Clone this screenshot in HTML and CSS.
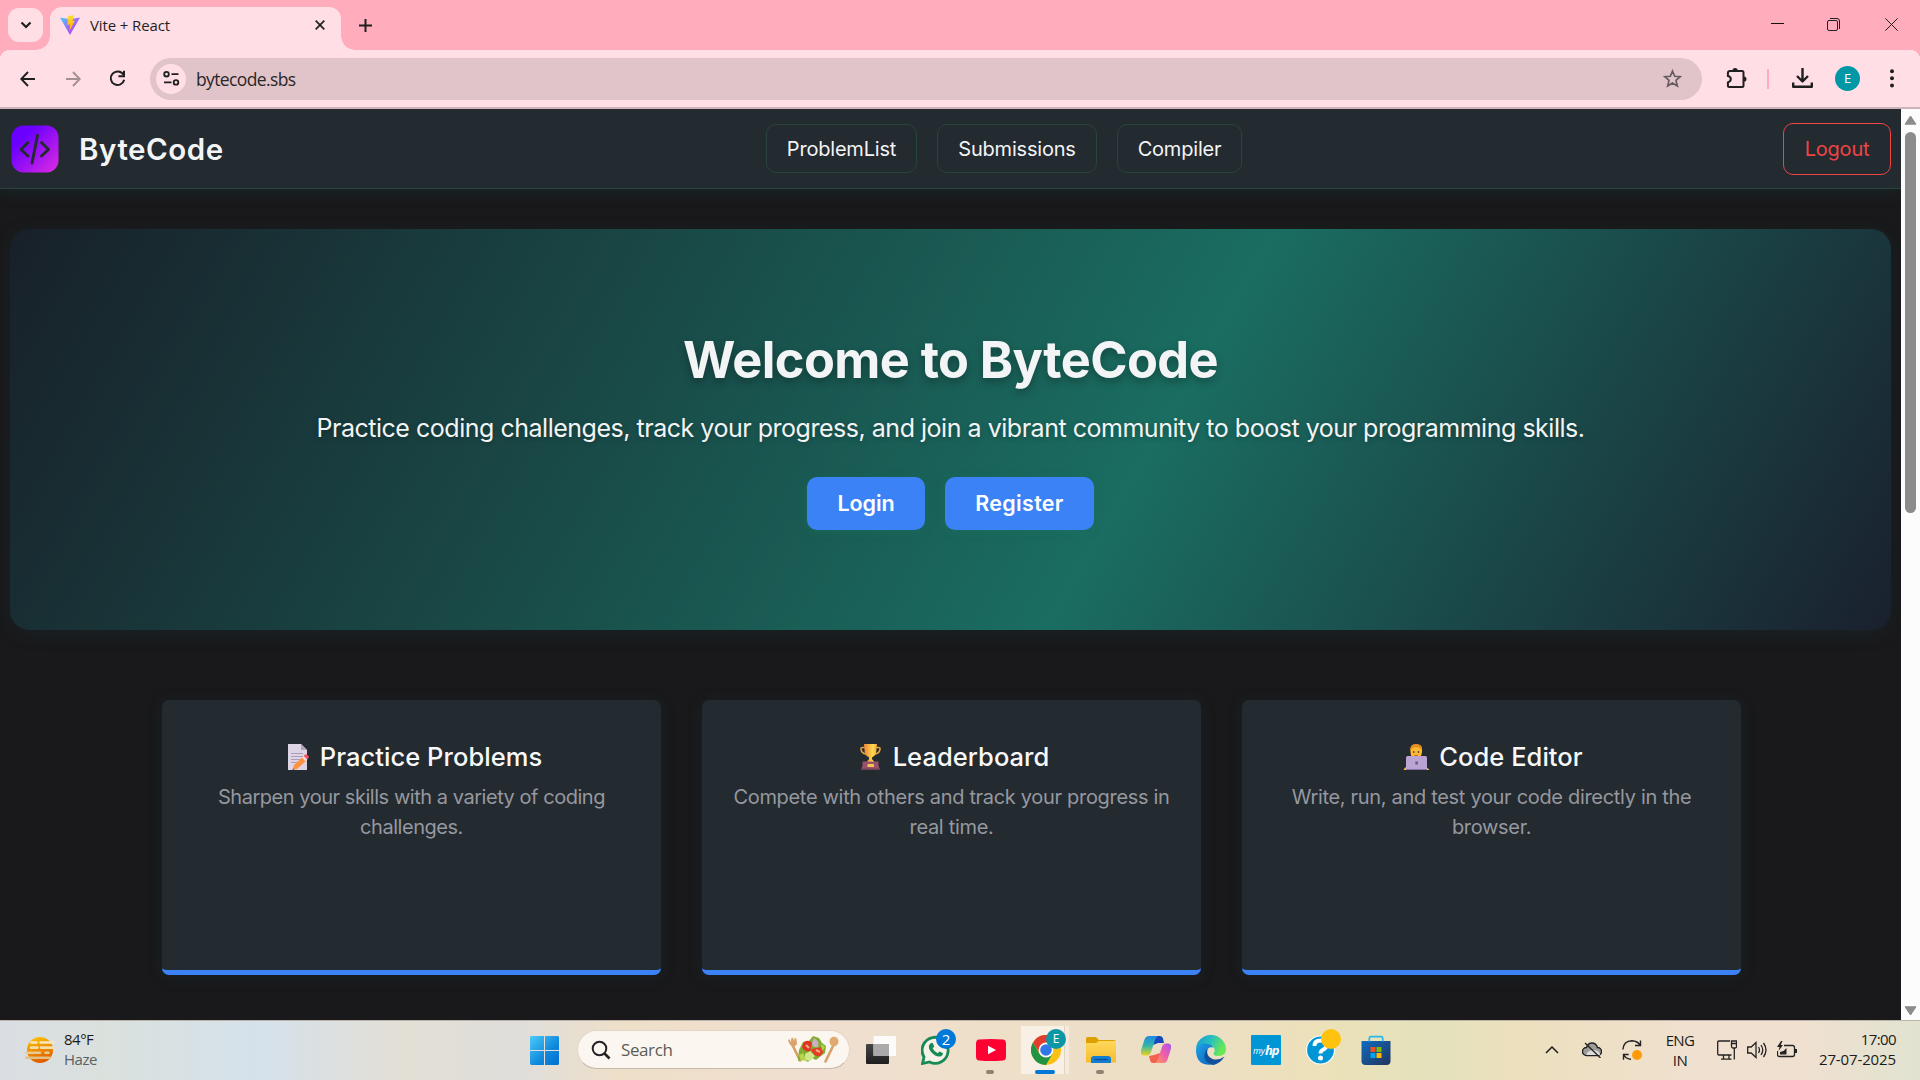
FILE: index.html
```html
<!DOCTYPE html>
<html lang="en">
<head>
<meta charset="utf-8">
<title>Vite + React</title>
<link rel="stylesheet" href="styles.css">
</head>
<body>
<div class="tabstrip">
  <button class="tab-search"><svg width="12" height="8" viewBox="0 0 12 8"><path d="M1.5 1.5 6 6l4.500-4.500" fill="none" stroke="#1f1f1f" stroke-width="2.200"/></svg></button>
  <div class="tab">
    <svg class="tab-icon" width="20" height="20" viewBox="0 0 20 20">
      <defs><linearGradient id="v1" x1="0" y1="0" x2="1" y2="1"><stop offset="0" stop-color="#41d1ff"/><stop offset=".5" stop-color="#9a68f8"/><stop offset="1" stop-color="#bd34fe"/></linearGradient>
      <linearGradient id="v2" x1="0" y1="0" x2="0" y2="1"><stop offset="0" stop-color="#ffdd35"/><stop offset="1" stop-color="#ffa800"/></linearGradient></defs>
      <path d="M0 2.500 10 4.200 20 2.500 10 20Z" fill="url(#v1)"/><path d="M8 1.200 14 0 12.600 6 15 5.600 9.500 16 10 9.600 7.400 10Z" fill="url(#v2)"/></svg>
    <span class="tab-title">Vite + React</span>
    <svg width="10" height="10" viewBox="0 0 10 10"><path d="M.7.7 9.300 9.300M9.300.7.7 9.300" stroke="#1f1f1f" stroke-width="1.700"/></svg>
  </div>
  <svg class="new-tab" width="13" height="13" viewBox="0 0 13 13"><path d="M6.500 0v13M0 6.500h13" stroke="#1f1f1f" stroke-width="2"/></svg>
  <div class="window-controls">
    <svg width="13" height="13" viewBox="0 0 13 13"><path d="M0 5.500h13" stroke="#111"/></svg>
    <svg width="13" height="13" viewBox="0 0 13 13"><path d="M3 .5h7a2.500 2.500 0 0 1 2.500 2.500v8M.5 4a1.500 1.500 0 0 1 1.500-1.500h7A1.500 1.500 0 0 1 10.500 4v7A1.500 1.500 0 0 1 9 12.500H2A1.500 1.500 0 0 1 .5 11Z" fill="none" stroke="#222"/></svg>
    <svg width="13" height="13" viewBox="0 0 13 13"><path d="m.3.3 12.400 12.400M12.700.3.3 12.700" stroke="#222"/></svg>
  </div>
</div>

<div class="toolbar">
  <div class="nav-icons">
    <svg width="16" height="16" viewBox="0 0 16 16"><path d="M15 8H2M8 1 1.300 8 8 15" fill="none" stroke="#1f1f1f" stroke-width="1.900"/></svg>
    <svg width="16" height="16" viewBox="0 0 16 16"><path d="M1 8h13M8 1l6.700 7L8 15" fill="none" stroke="#a38f94" stroke-width="1.900"/></svg>
    <svg width="17" height="17" viewBox="0 0 17 17"><path d="M14.300 4.500A6.800 6.800 0 1 0 15.200 9.800M15 .8v5.400H9.500" fill="none" stroke="#1f1f1f" stroke-width="2"/></svg>
  </div>
  <div class="omnibox">
    <span class="site-info"><svg width="17" height="15" viewBox="0 0 17 15"><g fill="none" stroke="#1f1f1f" stroke-width="1.800"><circle cx="3.500" cy="3.200" r="2.300"/><path d="M8.500 3.200H15.500M1 11.400h7.500"/><circle cx="13" cy="11.400" r="2.300"/></g></svg></span>
    <span class="url">bytecode.sbs</span>
    <svg width="19" height="19" viewBox="0 0 24 24"><path d="m12 2.500 2.700 6.600 7.100.6-5.400 4.700 1.700 7L12 17.600l-6.100 3.800 1.700-7L2.200 9.700l7.100-.6Z" fill="none" stroke="#655c60" stroke-width="2.100"/></svg>
  </div>
  <svg class="ext" width="21" height="21" viewBox="0 0 21 21"><path d="M1.900 5.200q0-2.300 2.200-2.300H16q1.500 0 1.500 1.500v13.200q0 1.500-1.500 1.500H3.400q-1.500 0-1.500-1.500v-3.200q2.900-1 2.900-3.400T1.900 8Z" fill="none" stroke="#1f1f1f" stroke-width="2"/><path d="M6.500 2.500a2.600 2.500 0 0 1 5.200 0M18 8.400a2.500 2.600 0 0 1 0 5.200" fill="#1f1f1f"/></svg>
  <span class="divider"></span>
  <svg class="download" width="21" height="21" viewBox="0 0 21 21"><path d="M10.500 0v13M5 8l5.500 5.500L16 8M1.200 14.500v4.300h18.600v-4.300" fill="none" stroke="#1f1f1f" stroke-width="2.400" stroke-linejoin="round"/></svg>
  <span class="profile">E</span>
  <svg class="dots" width="4" height="19" viewBox="0 0 4 19"><g fill="#1f1f1f"><circle cx="2" cy="2.200" r="2"/><circle cx="2" cy="9.300" r="2"/><circle cx="2" cy="16.400" r="2"/></g></svg>
</div>

<div class="viewport">
  <div class="page">
    <nav class="navbar">
      <svg class="logo" width="48" height="48" viewBox="0 0 48 48"><defs><linearGradient id="lg" x1="0" y1="0" x2="1" y2="1"><stop offset=".25" stop-color="#6a00ff"/><stop offset="1" stop-color="#e02be0"/></linearGradient></defs><rect x=".5" y=".5" width="47" height="47" rx="12" fill="url(#lg)"/><path d="M17 17.500 10 24.500l7 6.500M30.500 17.500l7 7-7 6.500M26.500 10.500 21 38" fill="none" stroke="#232a30" stroke-width="2.900" stroke-linecap="round" stroke-linejoin="round"/></svg>
      <span class="brand">ByteCode</span>
      <div class="links"><a class="problems">ProblemList</a><a class="submissions">Submissions</a><a class="compiler">Compiler</a></div>
      <a class="logout">Logout</a>
    </nav>

    <section class="hero">
      <h1>Welcome to ByteCode</h1>
      <p>Practice coding challenges, track your progress, and join a vibrant community to boost your programming skills.</p>
      <div class="actions"><a class="login">Login</a><a class="register">Register</a></div>
    </section>

    <section class="cards">
      <article class="card">
        <h2><svg width="34" height="26" viewBox="0 0 34 26"><path d="M7 0h13l6 6v20H7Z" fill="#ddd5e6"/><path d="M20 0v6h6Z" fill="#b3a5c0"/><path d="M10 9.500h12M10 12.500h12M10 15.500h10M10 18.500h6" stroke="#a99eb4" stroke-width="1"/><path d="M11.500 26 13 21l9-8.500 3.500 4-9.500 8.500Z" fill="#ff9140"/><path d="m21 13.500 2-1.800 3.300 3.800-2 1.700Z" fill="#eadff0"/><path d="m22.700 12 1.500-1.500q1.200-.8 2.300.5l1 1.200q.8 1.200-.4 2.200l-1 .8Z" fill="#f9505c"/><path d="m11.500 26 .5-1.800 1.300 1.300Z" fill="#555"/></svg>Practice Problems</h2>
        <p>Sharpen your skills with a variety of coding<br>challenges.</p>
      </article>
      <article class="card">
        <h2><svg width="34" height="26" viewBox="0 0 34 26"><defs><linearGradient id="cup"><stop offset="0" stop-color="#ee8739"/><stop offset=".7" stop-color="#ffdb4d"/><stop offset="1" stop-color="#efa23c"/></linearGradient></defs><path d="M11 3.500H8.500q-2 0-1.500 2 .8 4 5 4.500M22 3.500h2.500q2 0 1.500 2-.8 4-5 4.500" fill="none" stroke="#e8a540" stroke-width="1.500"/><path d="M10 0h13l-.7 8q-.6 4-4 5l-.4 2 2.600 3h-8l2.600-3-.4-2q-3.400-1-4-5Z" fill="url(#cup)"/><path d="M8.500 17.500h16v4l1.500 4.500H7l1.500-4.500Z" fill="#985268"/><path d="M7.300 24.500h18.400l.3 1.500H7Z" fill="#70405a"/><rect x="13.500" y="20" width="6.500" height="3" rx=".5" fill="#f4c456"/></svg>Leaderboard</h2>
        <p>Compete with others and track your progress in<br>real time.</p>
      </article>
      <article class="card">
        <h2><svg width="34" height="26" viewBox="0 0 34 26"><path d="M10.500 8Q9.500.5 16 0q7 .5 6 8-.5 6-6 6t-5.500-6Z" fill="#ffb92e"/><path d="M10.300 6Q9.800.2 16 0q6.800.2 6 6-2.500-2.800-6-3-3.500 0-5.700 3Z" fill="#e58b20"/><path d="M13.800 7v2M18.500 7v2" stroke="#5d3c42" stroke-width="1.300"/><path d="M14.500 11.500h3.200" stroke="#c9542c"/><path d="M5 23.500h22l2.500 2.500h-26Z" fill="#ffc02e"/><path d="M7.500 12h18q1.500 0 1.500 1.500V26H6V13.500Q6 12 7.500 12Z" fill="#b9a4d4"/><path d="M6 25h21v1H6Z" fill="#8d72ab"/><path d="M15.300 17.500h2.600v3h-2.600Z" fill="#735991"/></svg>Code Editor</h2>
        <p>Write, run, and test your code directly in the<br>browser.</p>
      </article>
    </section>
  </div>
  <div class="scrollbar">
    <svg width="13" height="10" viewBox="0 0 13 10"><path d="M6.500 1 12 9.200H1Z" fill="#8b8b8b" stroke="#8b8b8b" stroke-linejoin="round"/></svg>
    <span class="thumb"></span>
    <svg width="13" height="10" viewBox="0 0 13 10"><path d="M6.500 9 12 .8H1Z" fill="#8b8b8b" stroke="#8b8b8b" stroke-linejoin="round"/></svg>
  </div>
</div>

<footer class="taskbar">
  <svg class="weather" width="30" height="28" viewBox="0 0 30 28"><defs><linearGradient id="sun" x1="0" y1="0" x2=".3" y2="1"><stop offset="0" stop-color="#ffc900"/><stop offset="1" stop-color="#e25d00"/></linearGradient></defs><circle cx="15" cy="14" r="13" fill="url(#sun)"/><g fill="none" stroke-width="2.600" stroke-linecap="round"><path d="M6.500 6.500h5M15.500 6.500h13" stroke="#f5e9bf"/><path d="M6 11.600h6.500M16 11.600h12" stroke="#f5dfa8"/><path d="M1.500 16.700h13.500M20.500 16.700h3" stroke="#e5cb8d"/><path d="M1.500 21.800h23" stroke="#e1c282"/></g></svg>
  <div class="weather-text"><span>84°F</span><span class="muted">Haze</span></div>

  <svg class="start" width="29" height="29" viewBox="0 0 29 29"><defs><linearGradient id="win" x1="0" y1="0" x2="1" y2="1"><stop offset="0" stop-color="#4bcbfa"/><stop offset=".6" stop-color="#0f88dc"/><stop offset="1" stop-color="#006fce"/></linearGradient></defs><path d="M1 0h13v14H0V1Zm14 0h13l1 1v13H15ZM0 15h14v14H1l-1-1Zm15 0h14v13l-1 1H15Z" fill="url(#win)"/></svg>
  <div class="search">
    <svg width="20" height="20" viewBox="0 0 20 20"><circle cx="8.500" cy="8.500" r="6.800" fill="none" stroke="#242424" stroke-width="2"/><path d="m13.500 13.500 5 5" stroke="#242424" stroke-width="2.600"/></svg>
    <span>Search</span>
    <svg width="52" height="28" viewBox="0 0 52 28"><path d="m5 8 8 16.500M47 8l-8.500 17.500" stroke="#d99f65" stroke-width="2.600" stroke-linecap="round"/><path d="M1 4l1.500-.8L4 6l.3-4L6 1.800 7 5l.8-3.500L9.500 3l.5 5q-2 3.500-5 2.500Q2 8.500 1 4Z" fill="#dba36c"/><ellipse cx="47" cy="5.500" rx="4.500" ry="4.800" fill="#e0aa72"/><path d="m12 14 4-8 6-1 4-5 6 2 3 5 4 3-1 7-4 3-5 4-4-2-4 4-5-3-5 2Z" fill="#7fae2c"/><path d="M17 6q5-3 8 1l-2 9q-7-1-8-5Z" fill="#df3425"/><path d="M24 13l11-2q3 5-2 9-6 2-9-7Z" fill="#e23d29"/><path d="M19 9l3 3M29 14l4 2" stroke="#f3aa78" stroke-width="2.200"/><path d="M27 2q6 3 4 9-6 1-6-4Z" fill="#c9b0c5"/><path d="m18 18 5-3 5 5-5 5-5-1Z" fill="#d2e78c"/><path d="m12 19 4-2 3 7-5 1ZM34 8l4 3-3 4Z" fill="#b7d451"/></svg>
  </div>
  <div class="apps">
    <span class="app"><svg width="30" height="30" viewBox="0 0 30 30"><defs><linearGradient id="dark" x1="0" y1="0" x2="0" y2="1"><stop offset="0" stop-color="#454545"/><stop offset="1" stop-color="#1e1e1e"/></linearGradient></defs><rect x="0" y="9" width="23" height="20" rx="1" fill="url(#dark)"/><rect x="7.500" y="1" width="22.500" height="20" rx="1" fill="#fff" opacity=".87"/><path d="M7.500 9H23v12H7.500Z" fill="#aaa"/></svg></span>
    <span class="app"><svg width="30" height="30" viewBox="0 0 30 30"><path d="M1.500 28.500 3 22A13 13 0 1 1 8.500 27Z" fill="#f7f2e7" stroke="#178a55" stroke-width="2.800"/><path d="M9.500 8.500q1.500-1.500 2.700.5l1 2.500-1.500 2q2 3.500 5 4.700l1.700-1.700 3.400 1.600q.8 1-1 2.600-2.800 2-7-.4-6-4-6-9 .3-1.800 1.700-2.800Z" fill="#178a55"/></svg><b class="badge blue">2</b></span>
    <span class="app"><svg width="30" height="30" viewBox="0 0 30 30"><path d="M3 4.400q12-1 24 0 2.700.4 3 3.600.3 7 0 14-.3 3.200-3 3.600-12 1-24 0Q.3 25.200 0 22q-.3-7 0-14Q.3 4.800 3 4.400Z" fill="#ff0033"/><path d="m12 10.700 8 4.300-8 4.300Z" fill="#fff"/></svg><i class="run"></i></span>
    <span class="app active"><svg width="30" height="30" viewBox="0 0 30 30"><circle cx="15" cy="15" r="15" fill="#fbc116"/><path d="M2 7.500A15 15 0 0 1 28 7.500H15L9 18.500Z" fill="#e33b2e"/><path d="M2 7.500A15 15 0 0 0 15 30L21.500 18.700 15 22Q11 22 8.500 18.700Z" fill="#229342"/><circle cx="15" cy="15" r="7.400" fill="#fff"/><circle cx="15" cy="15" r="5.800" fill="#3277e8"/></svg><b class="badge teal">E</b><i class="run current"></i></span>
    <span class="app"><svg width="30" height="30" viewBox="0 0 30 30"><defs><linearGradient id="fold" x1="0" y1="0" x2="0" y2="1"><stop offset="0" stop-color="#ffd85c"/><stop offset="1" stop-color="#f5bd2d"/></linearGradient></defs><path d="M0 3.500Q0 2 1.500 2H10l3 3h15q2 0 2 2v5H0Z" fill="#dda000"/><path d="M0 8h10l3-2h17v21.500H0Z" fill="url(#fold)"/><path d="M5 28v-4q0-3 3-3h14q3 0 3 3v4Z" fill="#127dd1"/><path d="M8.500 24.500h13" stroke="#054f99" stroke-width="1.300"/></svg><i class="run"></i></span>
    <span class="app"><svg width="30" height="30" viewBox="0 0 30 30"><defs><linearGradient id="ca" x1="0" y1="0" x2="0" y2="1"><stop offset="0" stop-color="#2188e5"/><stop offset=".5" stop-color="#33b7a7"/><stop offset="1" stop-color="#ecd21c"/></linearGradient><linearGradient id="cb" x1="1" y1="0" x2="0" y2="1"><stop offset="0" stop-color="#a855f0"/><stop offset=".5" stop-color="#ef5da8"/><stop offset="1" stop-color="#ff9e5a"/></linearGradient></defs><path d="M13 1h6q2.500 0 3 2.500L23 8h-6l-5 2Z" fill="#1749b8"/><path d="M8 1h9q-2 1-3 4l-4 12q-1 3.500-4 3.500H3q-4 0-3-5L3.500 4.500Q4.700 1 8 1Z" fill="url(#ca)"/><path d="m8 21 5-1 6-2-1 8q-1 2-3 2h-3q-2.500 0-3-3Z" fill="#f3624f"/><path d="M22 28h-8q2-1 3-4l4-12q1-3.500 4-3.500h2q4 0 3 5l-3.500 11Q25.500 28 22 28Z" fill="url(#cb)"/></svg></span>
    <span class="app"><svg width="30" height="30" viewBox="0 0 30 30"><defs><linearGradient id="ea" x1="0" y1="0" x2="1" y2=".4"><stop offset="0" stop-color="#1598d8"/><stop offset=".5" stop-color="#29bfc0"/><stop offset="1" stop-color="#69e854"/></linearGradient><linearGradient id="eb" x1="0" y1="0" x2="1" y2="1"><stop offset="0" stop-color="#21a0e8"/><stop offset="1" stop-color="#0863b8"/></linearGradient></defs><path d="M0 15A15 14.500 0 0 1 30 14q0 7-7.500 7-5 0-5-2.500 3-4-1-7Q8 7 0 15Z" fill="url(#ea)"/><path d="M0 15q2-7.500 10-6.500 6 .5 7 4-5-1.500-6 3.500Q10 24 20 29 0 33 0 15Z" fill="url(#eb)"/><path d="M11.500 14q-2 7 5 10 6 2 12-2.500Q24 29 17 30 7 27 8.500 19q1-4 3-5Z" fill="#12509b"/></svg></span>
    <span class="app"><svg width="30" height="30" viewBox="0 0 30 30"><rect width="30" height="30" rx="1" fill="#0096d6"/><text class="myhp" x="2" y="18.500">my</text><text class="myhp hp" x="14" y="19.500">hp</text></svg></span>
    <span class="app"><svg width="30" height="30" viewBox="0 0 30 30"><circle cx="14.500" cy="15" r="14" fill="#0096d6" stroke="#fff" stroke-width="1.200"/><path d="M8.500 11q0-5.500 6-5.500t6 4.700q0 2.800-3.400 4.500-2.600 1.400-2.600 3.800" fill="none" stroke="#fff" stroke-width="3.800"/><circle cx="14.500" cy="23" r="2.500" fill="#fff"/></svg><b class="badge yellow"></b></span>
    <span class="app"><svg width="30" height="30" viewBox="0 0 30 30"><defs><linearGradient id="st" x1="0" y1="0" x2="1" y2="1"><stop offset="0" stop-color="#0e6cc0"/><stop offset="1" stop-color="#23345d"/></linearGradient></defs><path d="M.5 6h29v20q0 4-4 4h-21q-4 0-4-4Z" fill="url(#st)"/><path d="M8.300 6.500V3.200q0-1.500 1.500-1.500h10.400q1.500 0 1.500 1.500v3.300" fill="none" stroke="#27b9ee" stroke-width="1.700"/><path d="M9.500 12h5v5h-5Z" fill="#f25022"/><path d="M15.500 12h5v5h-5Z" fill="#7fba00"/><path d="M9.500 18h5v5h-5Z" fill="#00a4ef"/><path d="M15.500 18h5v5h-5Z" fill="#ffb900"/></svg></span>
  </div>
  <div class="tray">
    <svg class="chev" width="14" height="8" viewBox="0 0 14 8"><path d="M1 7l6-6 6 6" fill="none" stroke="#1d1d1d" stroke-width="1.500"/></svg>
    <svg class="cloud" width="20" height="16" viewBox="0 0 20 16"><path d="M4.500 13.500a4 4 0 0 1 0-8q1.500-4.500 5.500-4.500t5.500 4.500a4 4 0 0 1 0 8Z" fill="#9d9c99" stroke="#222" stroke-width="1.400"/><path d="M4 13q2-5 8-5 6 1 6 5Z" fill="#dedddb"/><path d="m3 1 15.500 15" stroke="#222" stroke-width="1.300"/></svg>
    <svg class="sync" width="20" height="20" viewBox="0 0 20 20"><path d="M.9 9.500Q1.500 1 10 .8q5.500.2 8.300 4.500M18.500.5v5h-5.500M6.700 14.500H1.500v5.300M1.800 15Q4 19 9 19.300" fill="none" stroke="#222" stroke-width="1.400"/><circle cx="15" cy="15" r="5" fill="#ff9b0b"/></svg>
    <div class="lang"><span>ENG</span><span>IN</span></div>
    <svg class="net" width="20" height="20" viewBox="0 0 20 20"><g fill="none" stroke="#222" stroke-width="1.300"><path d="M13 1H2Q.7 1 .7 2.300v11.400Q.7 15 2 15h12.500M6.500 15v4M12 15v4M4 19.200h10.500M17.300 8v11.500M14.500 1h5v5.500q0 1.500-1.500 1.500h-2q-1.500 0-1.500-1.500ZM14.500 3.500h5"/></g></svg>
    <svg class="sound" width="20" height="18" viewBox="0 0 20 18"><g fill="none" stroke="#222" stroke-width="1.300"><path d="M.7 6h3.500L9 1.500v15L4.200 12H.7ZM11.500 6q2 3 0 6M14 4q3.500 5 0 10M16.500 2q5 7 0 14"/></g></svg>
    <svg class="power" width="20" height="18" viewBox="0 0 20 18"><path d="M7 4.500h8.500q2 0 2 2v7q0 2-2 2h-13q-2 0-2-2V10" fill="none" stroke="#222" stroke-width="1.300"/><path d="M18 8h2v4h-2ZM3 13.500V11l3.500-1 3-3v6.500ZM4 0 0 6h2.500L1.500 10l4.500-6H3.700L5.500 0Z" fill="#222"/></svg>
    <div class="clock"><span class="time">17:00</span><span>27-07-2025</span></div>
  </div>
</footer>
</body>
</html>
```
FILE: styles.css
```css
* { box-sizing: border-box; }
body {
  margin: 0;
  width: 1920px;
  height: 1080px;
  overflow: hidden;
  display: flex;
  flex-direction: column;
  background: #19191b;
  font-family: Inter, "Noto Sans", sans-serif;
}
svg { display: block; flex: none; }

/* Browser tab strip */
.tabstrip {
  height: 50px;
  flex: none;
  display: flex;
  align-items: center;
  padding-left: 8px;
  background: #ffadbc;
  font-family: "Open Sans", "Noto Sans", sans-serif;
}
.tab-search {
  width: 35px;
  height: 34px;
  padding: 0;
  border: 0;
  border-radius: 11px;
  background: #ffdfe5;
  display: flex;
  align-items: center;
  justify-content: center;
}
.tab {
  position: relative;
  align-self: flex-end;
  width: 291px;
  height: 43px;
  margin-left: 7px;
  padding: 0 16px 8px 10px;
  border-radius: 12px 12px 0 0;
  background: #ffdfe5;
  display: flex;
  align-items: center;
}
.tab::before, .tab::after {
  content: "";
  position: absolute;
  bottom: 0;
  width: 14px;
  height: 14px;
}
.tab::before { left: -14px; background: radial-gradient(circle at 0 0, transparent 13.5px, #ffdfe5 14px); }
.tab::after { right: -14px; background: radial-gradient(circle at 100% 0, transparent 13.5px, #ffdfe5 14px); }
.tab-title { flex: 1; margin-left: 10px; font-size: 15px; letter-spacing: -.12px; color: #1f1f1f; }
.new-tab { margin-left: 18px; }
.window-controls { margin-left: auto; display: flex; gap: 44px; padding-right: 22px; margin-top: -1px; }
.window-controls svg:first-child { margin-right: -1px; }
.window-controls svg:last-child { margin-left: 1px; }

/* Address bar row */
.toolbar {
  height: 59px;
  flex: none;
  display: flex;
  align-items: center;
  background: linear-gradient(#ffdfe5, #ffdfe5) 0 10px / 100% 100% no-repeat, radial-gradient(circle at 10px 10px, #ffdfe5 10px, #ffadbc 10.500px) 0 0 / 10px 10px no-repeat, radial-gradient(circle at 0 10px, #ffdfe5 10px, #ffadbc 10.500px) 100% 0 / 10px 10px no-repeat, #ffdfe5;
  border-bottom: 2px solid #cdb2b9;
  font-family: "Open Sans", "Noto Sans", sans-serif;
}
.nav-icons { width: 150px; padding-left: 20px; display: flex; align-items: center; gap: 28.5px; }
.omnibox {
  width: 1552px;
  height: 42px;
  padding: 0 20px 0 6px;
  border-radius: 21px;
  background: #e0c4c9;
  display: flex;
  align-items: center;
}
.site-info {
  width: 30px;
  height: 30px;
  border-radius: 50%;
  background: #ffdfe5;
  display: flex;
  align-items: center;
  justify-content: center;
}
.url { flex: 1; margin-left: 10px; padding-top: 1px; font-size: 17.500px; letter-spacing: -.62px; color: #2b2628; }
.ext { margin-left: 24px; }
.divider { width: 2px; height: 20px; margin-left: 20px; background: #ffadbc; }
.download { margin-left: 23px; }
.profile {
  width: 25px;
  height: 25px;
  margin-left: 22px;
  border-radius: 50%;
  background: #0097a7;
  color: #fff;
  font-size: 13px;
  line-height: 25px;
  text-align: center;
}
.dots { margin-left: 30px; }

/* Web page */
.viewport { height: 911px; flex: none; display: flex; }
.page { width: 1901px; background: #19191b; overflow: hidden; }
.navbar {
  height: 80px;
  padding: 0 10px 0 11px;
  display: flex;
  align-items: center;
  background: #232a30;
  border-bottom: 1px solid #28443d;
  box-shadow: 0 4px 12px rgba(26, 60, 60, .35);
}
.brand { width: 697px; padding-left: 20px; font-size: 29.500px; font-weight: 600; letter-spacing: .55px; color: #f3f4f6; }
.links { display: flex; gap: 20px; padding-left: 10px; }
.links a, .logout {
  display: flex;
  align-items: center;
  justify-content: center;
  font-size: 20px;
  letter-spacing: -.2px;
}
.links a {
  height: 49px;
  border: 1px solid #28443d;
  border-radius: 10px;
  color: #f3f4f6;
}
.problems { width: 151px; }
.submissions { width: 160px; }
.compiler { width: 125px; }
.logout { width: 108px; height: 52px; margin-left: auto; border: 1px solid #ef4444; border-radius: 10px; color: #ef4444; }

.hero {
  height: 401px;
  margin: 40px 10px 0;
  padding-top: 101px;
  border-radius: 20px;
  background: linear-gradient(120deg, #182029 0%, #1a6d61 60%, #1a202e 100%);
  box-shadow: 0 4px 16px rgba(26, 50, 55, .35);
  text-align: center;
  color: #f3f4f6;
}
.hero h1 { margin: 0; font-size: 50.500px; line-height: 60px; font-weight: 700; letter-spacing: -.6px; text-shadow: 0 4px 8px rgba(0, 0, 0, .3); }
.hero p { margin: 18px 0 0; font-size: 25px; line-height: 40px; letter-spacing: -.478px; white-space: nowrap; text-shadow: 0 2px 5px rgba(0, 0, 0, .25); }
.actions { display: flex; justify-content: center; gap: 20px; margin-top: 29px; }
.actions a {
  height: 53px;
  line-height: 53px;
  border-radius: 10px;
  background: #3b82f6;
  color: #fff;
  font-size: 21.5px;
  font-weight: 600;
  box-shadow: 0 2px 8px rgba(26, 115, 95, .4);
}
.login { width: 118px; letter-spacing: -.1px; }
.register { width: 149px; letter-spacing: .3px; }

.cards { display: flex; gap: 41px; margin: 70px 0 0 162px; }
.card {
  width: 499px;
  height: 275px;
  padding-top: 42px;
  border-bottom: 5px solid #3b82f6;
  border-radius: 7px;
  background: #232a30;
  box-shadow: 0 2px 14px rgba(26, 50, 55, .35);
  text-align: center;
}
.card h2 {
  margin: 0;
  height: 30px;
  display: flex;
  align-items: center;
  justify-content: center;
  gap: 5px;
  font-size: 25.500px;
  line-height: 30px;
  font-weight: 450;
  letter-spacing: .05px;
  color: #f8f8f9;
}
.card p { margin: 10px 0 0; font-size: 20px; line-height: 30px; letter-spacing: -.315px; color: #96989f; }
.card:first-child p { letter-spacing: -.46px; }

.scrollbar { width: 19px; padding: 6px 0 4px; background: #fcfcfc; display: flex; flex-direction: column; align-items: center; }
.thumb { width: 11px; height: 381px; margin: 7px 0 auto; border-radius: 6px; background: #8b8b8b; }

/* Desktop taskbar */
.taskbar {
  height: 60px;
  flex: none;
  display: flex;
  align-items: center;
  padding: 0 24px 2px 25px;
  border-top: 1px solid #bcb3ab;
  background: linear-gradient(90deg, #dadee4 0, #dae1dd 100px, #d5e1eb 260px, #e2dfd5 400px, #e0dedb 520px, #eedfc9 620px, #f0dfd0 820px, #eedfc9 1000px, #ecdfc5 1200px, #ece1b8 1330px, #e3e2bc 1430px, #ece0bd 1510px, #f0e0d0 1700px, #f0e0d0 1800px, #e1e3d0 1920px);
  font-family: "Open Sans", "Noto Sans", sans-serif;
  font-size: 15px;
  line-height: 20px;
  color: #1b1b1b;
}
.weather-text, .lang, .clock { display: flex; flex-direction: column; }
.weather-text { width: 475px; padding-left: 9px; margin-top: -2px; letter-spacing: -.5px; }
.muted { color: #5b5f62; }
.start { margin-top: 1px; }
.search {
  width: 273px;
  height: 39px;
  margin-left: 18px;
  padding: 0 10px 0 13px;
  border: 1px solid #e4d6c6;
  border-bottom-color: #c5b7aa;
  border-radius: 20px;
  background: #fbf6f0;
  display: flex;
  align-items: center;
}
.search span { flex: 1; margin-left: 10px; font-size: 17px; letter-spacing: -.4px; color: #5f5c58; }
.apps { display: flex; margin-left: 3px; }
.app { position: relative; width: 55px; height: 50px; display: flex; align-items: center; justify-content: center; }
.active { background: linear-gradient(90deg, #f8f0e5 43px, #e3d4c2 43px 44px, #f5eadc 44px) 3px 1px / 48px 48px no-repeat; }
.badge {
  position: absolute;
  left: 28px;
  top: 4px;
  width: 20px;
  height: 20px;
  border-radius: 50%;
  color: #fff;
  font-size: 15px;
  font-weight: 400;
  line-height: 20px;
  text-align: center;
}
.blue { background: #0078d7; }
.teal { background: #0b97a6; font-size: 12px; }
.yellow { background: #ffc20e; }
.run { position: absolute; bottom: 1px; left: 23px; width: 8px; height: 4px; border-radius: 2px; background: #8b8374; }
.current { left: 17px; width: 20px; background: #0078d7; }
.myhp { font: italic 9px "Open Sans", sans-serif; fill: #fff; }
.hp { font-size: 13px; font-weight: 700; letter-spacing: -1px; }
.tray { flex: 1; display: flex; align-items: center; margin-left: 142px; }
.cloud { margin-left: 23px; }
.sync { margin-left: 20px; }
.lang { width: 36px; margin-left: 20px; align-items: center; letter-spacing: -.6px; }
.net { margin-left: 19px; }
.sound { margin-left: 10px; }
.power { margin-left: 10px; }
.clock { margin: -2px 0 0 auto; align-items: flex-end; letter-spacing: -.12px; white-space: nowrap; }
.time { letter-spacing: -.6px; }
```
